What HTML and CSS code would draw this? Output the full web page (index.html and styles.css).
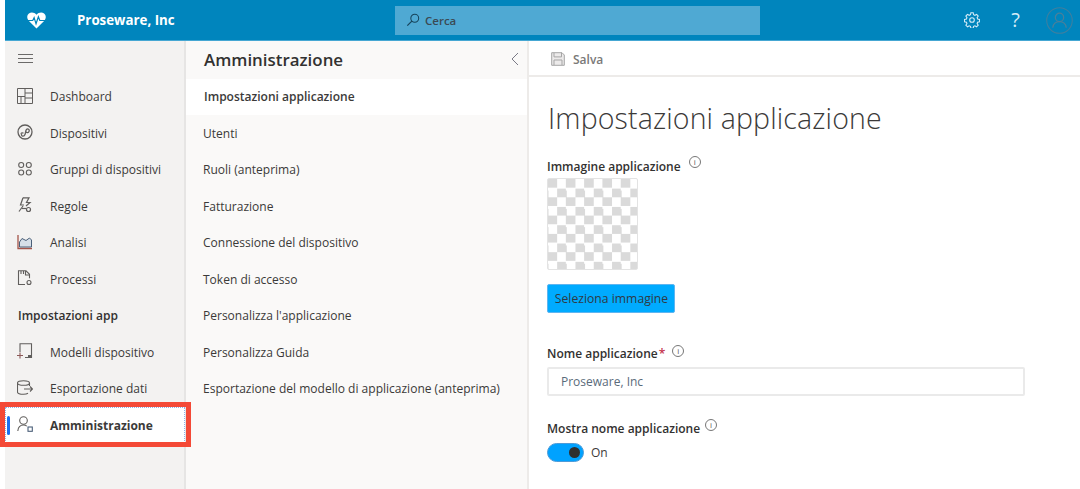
FILE: index.html
```html
<!DOCTYPE html>
<html lang="it">
<head>
<meta charset="utf-8">
<title>Proseware, Inc</title>
<link rel="stylesheet" href="styles.css">
</head>
<body>
<div class="app">
  <header class="topbar">
    <div class="brand">
      <svg class="logo" viewBox="0 0 20 18"><path d="M10 17.5 2 9.5C-.5 7-.3 3.2 2 1.500 4.500-.3 8 .4 10 3c2-2.600 5.500-3.300 8-1.500 2.300 1.700 2.500 5.500 0 8z" fill="#fff"/><path d="M1 9h5l1.500-3 2 6.500L12 5l1.500 4H19" fill="none" stroke="#0085bd" stroke-width="1.300"/></svg>
      <span class="brand-name">Proseware, Inc</span>
    </div>
    <div class="search">
      <svg class="search-icon" viewBox="0 0 16 16"><circle cx="10" cy="6" r="4.500" fill="none" stroke="#17435a" stroke-width="1.200"/><path d="M6.700 9.300 1.500 14.500" stroke="#17435a" stroke-width="1.400"/></svg>
      <span>Cerca</span>
    </div>
    <div class="top-actions">
      <svg class="gear" viewBox="0 0 16 16"><path d="M6.800 1h2.400l.4 2 1.300.6 1.800-1 1.600 1.800-1.100 1.600.5 1.300 2 .5v2.400l-2 .5-.5 1.300 1.100 1.700-1.700 1.600-1.700-1-1.300.5-.4 2H6.800l-.4-2-1.300-.5-1.700 1-1.700-1.600 1.100-1.700-.5-1.300-2-.5V7.800l2-.5.5-1.300L1.700 4.400l1.600-1.800 1.800 1 1.300-.6z" fill="none" stroke="#d5ecf7" stroke-width="1.100" transform="translate(.2 -.2) scale(.98)"/><circle cx="8" cy="8" r="2.300" fill="none" stroke="#d5ecf7" stroke-width="1.100"/></svg>
      <span class="help">?</span>
      <svg class="avatar" viewBox="0 0 26 26"><circle cx="13" cy="13" r="12.300" fill="none" stroke="#3f7f9f" stroke-width="1"/><circle cx="13" cy="10" r="4" fill="none" stroke="#4a7f9a" stroke-width="1.200"/><path d="M6.500 20c.5-3.500 3-5.800 6.500-5.800s6 2.300 6.500 5.800" fill="none" stroke="#4a7f9a" stroke-width="1.200"/></svg>
    </div>
  </header>
  <div class="body">
    <nav class="sidebar">
      <div class="hamburger"><span></span><span></span><span></span></div>
      <a class="nav-row"><svg class="nav-icon" viewBox="0 0 16 16"><path d="M.5.500h15v15H.5zM.5 8.500h7.500M8 .5v15M8 5h7.500M8 10h7.500M4 8.500v7" fill="none" stroke="#605e5c"/></svg><span>Dashboard</span></a>
      <a class="nav-row"><svg class="nav-icon" viewBox="0 0 16 16"><circle cx="8" cy="8" r="7" fill="none" stroke="#605e5c" stroke-width="1.300"/><path d="M4.500 10c-.5 2.500 2.500 3 3.500.5s.2-3.500 1.500-5 3.500 0 2.500 2-2.500 1-3 .5M3.800 9.800c.5-1 1.800-1.300 2.700-.5" fill="none" stroke="#605e5c" stroke-width="1.300"/></svg><span>Dispositivi</span></a>
      <a class="nav-row"><svg class="nav-icon" viewBox="0 0 16 16"><g fill="none" stroke="#605e5c" stroke-width="1.100"><circle cx="4.200" cy="4" r="2.500"/><circle cx="11.800" cy="4" r="2.500"/><circle cx="4.200" cy="11.500" r="2.500"/><circle cx="11.800" cy="11.500" r="2.500"/></g></svg><span>Gruppi di dispositivi</span></a>
      <a class="nav-row"><svg class="nav-icon" viewBox="0 0 16 16"><g fill="none" stroke="#605e5c" stroke-width="1.200"><path d="M6 .8h6L9.500 5.500H13L9 9M6 .8 3.500 8H7"/><path d="M6 9 2 14.500"/><circle cx="11.500" cy="12.500" r="2"/><path d="M5 11.500h4"/></g></svg><span>Regole</span></a>
      <a class="nav-row"><svg class="nav-icon" viewBox="0 0 16 16"><path d="M1 1v13.500h14" fill="none" stroke="#a4544a" stroke-width="1.300"/><path d="M2.500 8 5 4.500 9 6.500 12.500 4 14.500 6v7h-12z" fill="#d6dfe8" stroke="#4a5f78"/></svg><span>Analisi</span></a>
      <a class="nav-row"><svg class="nav-icon" viewBox="0 0 16 16"><g fill="none" stroke="#605e5c" stroke-width="1.100"><path d="M8 14.500H1.500V.8h7.500l3.500 3.500v4"/><path d="M8.500 1v4h4M4 1v3M6.500 1v3"/><circle cx="12" cy="12.500" r="2"/></g></svg><span>Processi</span></a>
      <div class="nav-heading">Impostazioni app</div>
      <a class="nav-row"><svg class="nav-icon" viewBox="0 0 16 16"><g fill="none" stroke="#605e5c" stroke-width="1.100"><path d="M3 9V.8h11.500v13.700H8"/></g><path d="M11 12h3.500v2.500H11z" fill="#605e5c"/><path d="M0 12.500h6M3 9.500v6" stroke="#8c5a58" stroke-width="1.100"/></svg><span>Modelli dispositivo</span></a>
      <a class="nav-row"><svg class="nav-icon" viewBox="0 0 16 16"><g fill="none" stroke="#605e5c" stroke-width="1.100"><ellipse cx="6.500" cy="3" rx="6" ry="2.300"/><path d="M.5 3v9c0 1.300 2.700 2.300 6 2.300 2 0 3.500-.3 4.500-1M12.500 3v3M7 9h8.500M13 6.500 15.500 9 13 11.500"/></g></svg><span>Esportazione dati</span></a>
      <a class="nav-row is-active"><svg class="nav-icon" viewBox="0 0 16 16"><g fill="none" stroke="#605e5c" stroke-width="1.100"><circle cx="6.500" cy="4.500" r="3.800"/><path d="M.8 15c.3-3.500 2.500-6 5.700-6 1.300 0 2.400.4 3.300 1.100"/></g><rect x="11" y="11" width="4.300" height="4.300" fill="none" stroke="#4a5f78" stroke-width="1.100"/></svg><span>Amministrazione</span></a>
    </nav>
    <aside class="panel">
      <div class="panel-head">
        <h2>Amministrazione</h2>
        <svg class="chevron" viewBox="0 0 8 14"><path d="M7 1 1 7l6 6" fill="none" stroke="#7a7a86" stroke-width="1"/></svg>
      </div>
      <a class="panel-row is-selected">Impostazioni applicazione</a>
      <a class="panel-row">Utenti</a>
      <a class="panel-row">Ruoli (anteprima)</a>
      <a class="panel-row">Fatturazione</a>
      <a class="panel-row">Connessione del dispositivo</a>
      <a class="panel-row">Token di accesso</a>
      <a class="panel-row">Personalizza l'applicazione</a>
      <a class="panel-row">Personalizza Guida</a>
      <a class="panel-row">Esportazione del modello di applicazione (anteprima)</a>
    </aside>
    <main class="main">
      <div class="toolbar">
        <svg class="save-icon" viewBox="0 0 14 14"><path d="M.7.7h10.300l2.300 2.300v10.300H.7z" fill="#eceaea" stroke="#a5a5a5"/><path d="M3 .9v4h7.500v-4M3 13v-5h8v5" fill="none" stroke="#a5a5a5"/></svg>
        <span>Salva</span>
      </div>
      <div class="content">
        <h1>Impostazioni applicazione</h1>
        <div class="label label-image">Immagine applicazione<span class="info">i</span></div>
        <div class="checker"></div>
        <button class="primary" type="button">Seleziona immagine</button>
        <div class="label label-name">Nome applicazione<span class="req">*</span><span class="info">i</span></div>
        <div class="text-input">Proseware, Inc</div>
        <div class="label label-show">Mostra nome applicazione<span class="info">i</span></div>
        <div class="toggle-row"><span class="toggle"><span class="knob"></span></span><span>On</span></div>
      </div>
    </main>
  </div>
</div>
</body>
</html>
```

FILE: styles.css
```css
*, *::before, *::after { box-sizing: border-box; }
html, body { margin: 0; height: 100%; background: #fff; overflow: hidden; }
body { font-family: "Open Sans", "Noto Sans", sans-serif; font-size: 12px; color: #323130; }
.app { height: 489px; padding-left: 5px; display: flex; flex-direction: column; }

.topbar { height: 41px; flex: none; background: #0085bd; border-bottom: 1px solid #45a7d3; display: flex; align-items: center; }
.brand { width: 390px; display: flex; align-items: center; }
.logo { width: 19px; height: 17px; margin-left: 22px; }
.brand-name { margin-left: 31px; color: #fff; font-weight: 700; font-size: 13.300px; }
.search { width: 365px; height: 29px; background: #4fa9d3; display: flex; align-items: center; padding-left: 11px; color: #3b4a54; font-weight: 600; font-size: 11.500px; gap: 5px; }
.search-icon { width: 14px; height: 14px; }
.top-actions { flex: 1; display: flex; align-items: center; justify-content: flex-end; }
.gear { width: 16px; height: 16px; margin-right: 31px; }
.help { color: #d5ecf7; font-size: 20px; line-height: 20px; margin-right: 26px; }
.avatar { width: 27px; height: 27px; margin-right: 7px; }

.body { flex: 1; display: flex; min-height: 0; }

.sidebar { width: 181px; flex: none; background: #f3f2f1; border-right: 2px solid #e6e5e4; display: flex; flex-direction: column; }
.hamburger { height: 37.300px; flex: none; padding: 13px 0 0 13px; }
.hamburger span { display: block; width: 15px; height: 1px; background: #6b6a69; margin-bottom: 3px; }
.nav-row { height: 36.500px; flex: none; display: flex; align-items: center; color: #3b3a39; padding-left: 12px; font-size: 12px; }
.nav-icon { width: 16px; height: 16px; margin-right: 17px; flex: none; margin-top: -2px; }
.nav-heading { height: 36.500px; flex: none; display: flex; align-items: center; padding-left: 13px; font-weight: 600; font-size: 12px; }
.nav-row.is-active { position: relative; background: #fff; font-weight: 700; height: 36px; padding-top: 1px; margin-right: -1px; outline: 1px dotted #8fb2e6; outline-offset: -1px; }
.nav-row.is-active::before { content: ""; position: absolute; left: 2px; top: 9px; width: 3px; height: 19px; border-radius: 2px; background: #1a6ff0; }
.nav-row.is-active::after { content: ""; position: absolute; left: -5px; right: -6px; top: -5px; height: 45px; border: 5px solid #f44936; }

.panel { width: 343px; flex: none; background: #faf9f8; border-right: 2px solid #edebe9; display: flex; flex-direction: column; }
.panel-head { height: 37.500px; flex: none; display: flex; align-items: center; justify-content: space-between; padding: 0 8px 1px 18px; }
.panel-head h2 { margin: 0; font-size: 16.900px; font-weight: 600; color: #323130; }
.chevron { width: 8px; height: 14px; }
.panel-row { height: 36.500px; flex: none; display: flex; align-items: center; padding-left: 17px; color: #3b3a39; font-size: 12.030px; white-space: nowrap; }
.panel-row.is-selected { background: #fff; font-weight: 600; padding-left: 18px; }

.main { flex: 1; min-width: 0; display: flex; flex-direction: column; }
.toolbar { height: 36px; flex: none; border-bottom: 2px solid #edebe9; display: flex; align-items: center; padding: 2px 0 0 22px; gap: 8px; color: #7a7978; font-weight: 600; font-size: 12px; }
.save-icon { width: 14px; height: 14px; }
.content { padding-left: 18px; display: flex; flex-direction: column; align-items: flex-start; }
.content h1 { margin: 21px 0 0 1px; font-size: 28.500px; line-height: 40px; font-weight: 300; color: #3b3a39; white-space: nowrap; letter-spacing: .14px; }
.label { font-weight: 600; font-size: 12px; line-height: 16px; color: #323130; display: flex; }
.label-image { margin-top: 21px; }
.label-name { margin-top: 33px; }
.label-show { margin-top: 25px; }
.req { color: #c4314b; margin-left: 1px; }
.info { width: 12px; height: 12px; border: 1px solid #777; border-radius: 50%; font-size: 8px; line-height: 10px; text-align: center; font-weight: 400; color: #555; margin-left: 8px; }
.label-image .info { margin-top: -3px; }
.label-name .info { margin-top: -1px; margin-left: 7px; }
.label-show .info { margin-top: -2px; margin-left: 5px; }
.checker { width: 91px; height: 92px; margin-top: 3px; border: 1px solid #e3e3e3; border-radius: 2px; background-color: #fff; background-image: conic-gradient(#dadada 25%, #fff 0 50%, #dadada 0 75%, #fff 0); background-size: 18.300px 18.300px; background-position: -9.150px 0; }
.primary { margin-top: 14px; width: 128px; height: 29px; padding: 0 0 0 1px; background: #00abff; border: 1px solid #5fb5f0; border-radius: 2px; font: 12.200px "Open Sans", "Noto Sans", sans-serif; color: #2f3a45; }
.text-input { width: 478px; height: 29px; margin-top: 5px; border: 2px solid #eaeaea; border-radius: 2px; padding-left: 12px; line-height: 25px; color: #5a6b7a; font-size: 12px; }
.toggle-row { display: flex; align-items: center; gap: 7px; margin-top: 6px; color: #3b3a39; font-size: 12px; }
.toggle { width: 37px; height: 19px; border-radius: 10px; background: #00a2ff; border: 1px solid #4d9bd8; display: flex; align-items: center; justify-content: flex-end; padding-right: 3px; }
.knob { width: 11px; height: 11px; border-radius: 50%; background: #2e2e2e; }
```
